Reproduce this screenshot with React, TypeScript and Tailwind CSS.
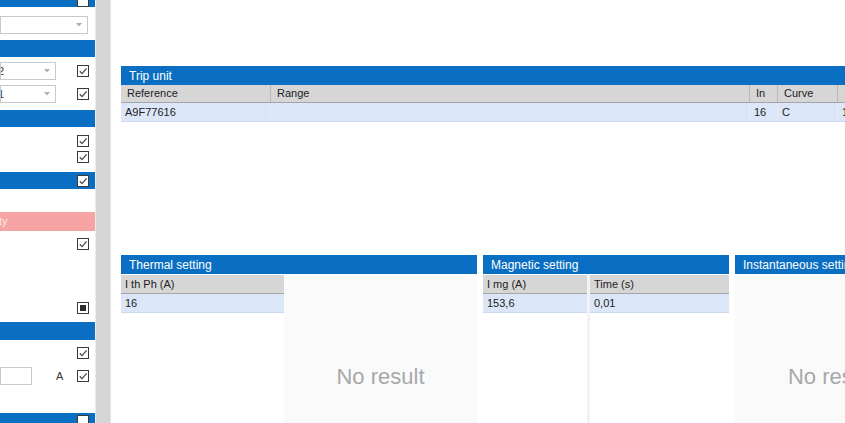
import React from 'react';

const BLUE = 'bg-[#0a6fc2]';

const Check: React.FC<{ mode?: 'checked' | 'empty' | 'filled' }> = ({ mode = 'checked' }) => (
  <div className="w-[12px] h-[12px] shrink-0 border border-[#3a3a3a] bg-white flex items-center justify-center">
    {mode === 'checked' && (
      <svg width="10" height="10" viewBox="0 0 10 10">
        <path d="M1.8 5.2 L4.1 7.6 L8.6 2.4" fill="none" stroke="#4a4a4a" strokeWidth="1.3" />
      </svg>
    )}
    {mode === 'filled' && <div className="w-[6px] h-[6px] bg-[#2e2e2e]" />}
  </div>
);

const Arrow: React.FC = () => (
  <svg width="6" height="4" viewBox="0 0 6 4" className="shrink-0">
    <path d="M0 0 L6 0 L3 3.5 Z" fill="#b0b0b0" />
  </svg>
);

const Combo: React.FC<{ text?: string; width: string }> = ({ text, width }) => (
  <div className={`${width} h-[18px] border border-[#c9c9c9] bg-white flex items-center justify-between pr-[5px] overflow-hidden`}>
    <span className="text-[11px] text-[#333] -ml-[3px]">{text}</span>
    <Arrow />
  </div>
);

const SideHeader: React.FC<{ h: string; mt: string; box?: boolean; clip?: boolean }> = ({ h, mt, box, clip }) => (
  <div className={`${h} ${mt} ${BLUE} shrink-0 flex ${clip ? 'items-end' : 'items-center'} justify-end pr-[6px] overflow-hidden`}>
    {box && <Check mode={clip ? 'empty' : 'checked'} />}
  </div>
);

const Sidebar: React.FC = () => (
  <div className="w-[95px] shrink-0 bg-white flex flex-col overflow-hidden">
    <SideHeader h="h-[7px]" mt="mt-0" box clip />
    <div className="mt-[9px] shrink-0">
      <Combo width="w-[88px]" />
    </div>
    <SideHeader h="h-[17px]" mt="mt-[6px]" />
    <div className="mt-[5px] h-[18px] shrink-0 flex items-center justify-between pr-[6px]">
      <Combo width="w-[56px]" text="2" />
      <Check />
    </div>
    <div className="mt-[5px] h-[18px] shrink-0 flex items-center justify-between pr-[6px]">
      <Combo width="w-[56px]" text="1" />
      <Check />
    </div>
    <SideHeader h="h-[17px]" mt="mt-[7px]" />
    <div className="mt-[8px] shrink-0 flex justify-end pr-[6px]">
      <Check />
    </div>
    <div className="mt-[4px] shrink-0 flex justify-end pr-[6px]">
      <Check />
    </div>
    <SideHeader h="h-[17px]" mt="mt-[9px]" box />
    <div className="mt-[23px] h-[19px] shrink-0 bg-[#f6a3a3] flex items-center overflow-hidden">
      <span className="text-[11px] text-[#fde8e8] -ml-[1px]">ty</span>
    </div>
    <div className="mt-[7px] shrink-0 flex justify-end pr-[6px]">
      <Check />
    </div>
    <div className="mt-[52px] shrink-0 flex justify-end pr-[6px]">
      <Check mode="filled" />
    </div>
    <SideHeader h="h-[18px]" mt="mt-[8px]" />
    <div className="mt-[7px] shrink-0 flex justify-end pr-[6px]">
      <Check />
    </div>
    <div className="mt-[8px] h-[18px] shrink-0 flex items-center pr-[6px]">
      <div className="w-[32px] h-[18px] border border-[#c9c9c9] bg-white" />
      <span className="ml-[24px] text-[11px] text-[#333]">A</span>
      <div className="flex-1" />
      <Check />
    </div>
    <div className="mt-[28px] h-[18px] shrink-0 bg-[#0a6fc2] flex items-start justify-end pr-[6px] pt-[2px]">
      <div className="w-[12px] h-[12px] border border-[#3a3a3a] bg-white" />
    </div>
  </div>
);

const Splitter: React.FC = () => (
  <div className="w-[16px] shrink-0 flex">
    <div className="w-[1px] bg-[#ececec]" />
    <div className="flex-1 bg-[#d5d5d5]" />
    <div className="w-[1px] bg-[#e4e4e4]" />
  </div>
);

const HeadCell: React.FC<{ w: string; label: string; last?: boolean }> = ({ w, label, last }) => (
  <div className={`${w} shrink-0 h-full flex items-center px-[6px] ${last ? '' : 'border-r border-[#b9b9b9]'}`}>
    <span className="text-[11px] text-[#222] whitespace-nowrap">{label}</span>
  </div>
);

const DataCell: React.FC<{ w: string; value: string; last?: boolean }> = ({ w, value, last }) => (
  <div className={`${w} shrink-0 h-full flex items-center px-[4px] ${last ? '' : 'border-r border-[#e4ecf6]'}`}>
    <span className="text-[11px] text-[#222] whitespace-nowrap">{value}</span>
  </div>
);

const tripColumns = [
  { w: 'w-[150px]', label: 'Reference', value: 'A9F77616' },
  { w: 'w-[479px]', label: 'Range', value: '' },
  { w: 'w-[28px]', label: 'In', value: '16' },
  { w: 'w-[60px]', label: 'Curve', value: 'C' },
  { w: 'w-[90px]', label: '', value: '1' },
];

const PanelHeader: React.FC<{ title: string }> = ({ title }) => (
  <div className={`h-[19px] shrink-0 ${BLUE} flex items-center px-[8px]`}>
    <span className="text-[12px] text-white whitespace-nowrap">{title}</span>
  </div>
);

const GridColumn: React.FC<{ w: string; label: string; value: string }> = ({ w, label, value }) => (
  <div className={`${w} shrink-0 flex flex-col bg-white`}>
    <div className="mt-[1px] h-[19px] bg-[#d6d6d6] border-b border-[#a6a6a6] flex items-center px-[4px]">
      <span className="text-[11px] text-[#222] whitespace-nowrap">{label}</span>
    </div>
    <div className="h-[19px] bg-[#dbe7f8] border-b border-[#cbd9ec] flex items-center px-[4px]">
      <span className="text-[11px] text-[#222]">{value}</span>
    </div>
  </div>
);

const NoResult: React.FC = () => (
  <div className="flex-1 bg-[#fafafa] flex items-center justify-center">
    <span className="text-[22px] text-[#a8a8a8] whitespace-nowrap">No result</span>
  </div>
);

const Main: React.FC = () => (
  <div className="flex-1 flex flex-col pl-[10px] pt-[66px] bg-white overflow-hidden">
    {/* Trip unit */}
    <div className="w-[810px] shrink-0 flex flex-col">
      <PanelHeader title="Trip unit" />
      <div className="h-[18px] bg-[#d6d6d6] border-b border-[#a6a6a6] flex">
        {tripColumns.map((c, i) => (
          <HeadCell key={i} w={c.w} label={c.label} last={i === tripColumns.length - 1} />
        ))}
      </div>
      <div className="h-[19px] bg-[#dbe7f8] border-b border-[#cbd9ec] flex">
        {tripColumns.map((c, i) => (
          <DataCell key={i} w={c.w} value={c.value} last={i === tripColumns.length - 1} />
        ))}
      </div>
    </div>

    {/* Settings */}
    <div className="mt-[133px] h-[223px] flex gap-[6px] shrink-0">
      <div className="w-[356px] shrink-0 flex flex-col">
        <PanelHeader title="Thermal setting" />
        <div className="flex-1 flex">
          <GridColumn w="w-[163px]" label="I th Ph (A)" value="16" />
          <NoResult />
        </div>
      </div>
      <div className="w-[246px] shrink-0 flex flex-col">
        <PanelHeader title="Magnetic setting" />
        <div className="flex-1 flex gap-[3px] bg-[#f3f3f3]">
          <GridColumn w="w-[104px]" label="I mg (A)" value="153,6" />
          <GridColumn w="w-[139px]" label="Time (s)" value="0,01" />
        </div>
      </div>
      <div className="w-[194px] shrink-0 flex flex-col">
        <PanelHeader title="Instantaneous setting" />
        <NoResult />
      </div>
    </div>
  </div>
);

export default function App() {
  return (
    <div className="w-[845px] h-[423px] overflow-hidden flex bg-white font-['Liberation_Sans',Arial,sans-serif]">
      <Sidebar />
      <Splitter />
      <Main />
    </div>
  );
}
